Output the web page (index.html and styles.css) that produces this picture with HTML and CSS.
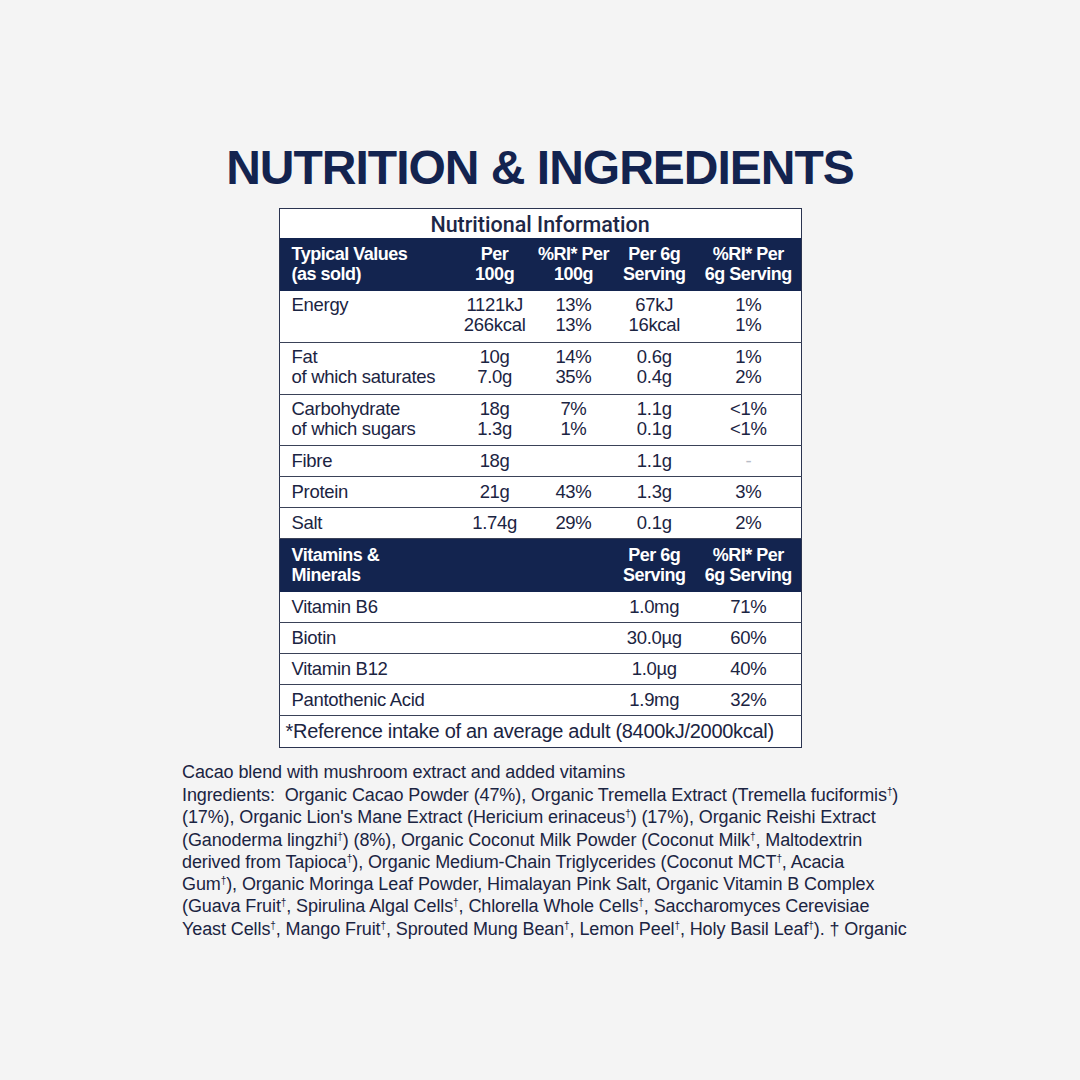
FILE: index.html
```html
<!DOCTYPE html>
<html lang="en">
<head>
<meta charset="utf-8">
<title>Nutrition &amp; Ingredients</title>
<link rel="stylesheet" href="styles.css">
</head>
<body>
<main class="page">
  <h1 class="title">NUTRITION &amp; INGREDIENTS</h1>
  <table class="nutri">
    <colgroup>
      <col class="c1"><col class="c2"><col class="c3"><col class="c4"><col class="c5">
    </colgroup>
    <tr class="caption-row"><td colspan="5">Nutritional Information</td></tr>
    <tr class="head">
      <th class="lbl">Typical Values<br>(as sold)</th>
      <th>Per<br>100g</th>
      <th>%RI* Per<br>100g</th>
      <th>Per 6g<br>Serving</th>
      <th>%RI* Per<br>6g Serving</th>
    </tr>
    <tr class="double">
      <td class="lbl">Energy</td>
      <td>1121kJ<br>266kcal</td>
      <td>13%<br>13%</td>
      <td>67kJ<br>16kcal</td>
      <td>1%<br>1%</td>
    </tr>
    <tr class="double">
      <td class="lbl">Fat<br>of which saturates</td>
      <td>10g<br>7.0g</td>
      <td>14%<br>35%</td>
      <td>0.6g<br>0.4g</td>
      <td>1%<br>2%</td>
    </tr>
    <tr class="double">
      <td class="lbl">Carbohydrate<br>of which sugars</td>
      <td>18g<br>1.3g</td>
      <td>7%<br>1%</td>
      <td>1.1g<br>0.1g</td>
      <td>&lt;1%<br>&lt;1%</td>
    </tr>
    <tr class="single">
      <td class="lbl">Fibre</td>
      <td>18g</td>
      <td></td>
      <td>1.1g</td>
      <td class="muted">-</td>
    </tr>
    <tr class="single">
      <td class="lbl">Protein</td>
      <td>21g</td>
      <td>43%</td>
      <td>1.3g</td>
      <td>3%</td>
    </tr>
    <tr class="single">
      <td class="lbl">Salt</td>
      <td>1.74g</td>
      <td>29%</td>
      <td>0.1g</td>
      <td>2%</td>
    </tr>
    <tr class="head">
      <th class="lbl">Vitamins &amp;<br>Minerals</th>
      <th></th>
      <th></th>
      <th>Per 6g<br>Serving</th>
      <th>%RI* Per<br>6g Serving</th>
    </tr>
    <tr class="single">
      <td class="lbl">Vitamin B6</td>
      <td></td><td></td>
      <td>1.0mg</td>
      <td>71%</td>
    </tr>
    <tr class="single">
      <td class="lbl">Biotin</td>
      <td></td><td></td>
      <td>30.0µg</td>
      <td>60%</td>
    </tr>
    <tr class="single">
      <td class="lbl">Vitamin B12</td>
      <td></td><td></td>
      <td>1.0µg</td>
      <td>40%</td>
    </tr>
    <tr class="single">
      <td class="lbl">Pantothenic Acid</td>
      <td></td><td></td>
      <td>1.9mg</td>
      <td>32%</td>
    </tr>
    <tr class="foot"><td colspan="5">*Reference intake of an average adult (8400kJ/2000kcal)</td></tr>
  </table>

  <section class="ingredients">
    <p class="desc">Cacao blend with mushroom extract and added vitamins</p>
    <p class="list">Ingredients:&nbsp; Organic Cacao Powder (47%), Organic Tremella Extract (Tremella fuciformis<sup>†</sup>)<br>(17%), Organic Lion's Mane Extract (Hericium erinaceus<sup>†</sup>) (17%), Organic Reishi Extract<br>(Ganoderma lingzhi<sup>†</sup>) (8%), Organic Coconut Milk Powder (Coconut Milk<sup>†</sup>, Maltodextrin<br>derived from Tapioca<sup>†</sup>), Organic Medium-Chain Triglycerides (Coconut MCT<sup>†</sup>, Acacia<br>Gum<sup>†</sup>), Organic Moringa Leaf Powder, Himalayan Pink Salt, Organic Vitamin B Complex<br>(Guava Fruit<sup>†</sup>, Spirulina Algal Cells<sup>†</sup>, Chlorella Whole Cells<sup>†</sup>, Saccharomyces Cerevisiae<br>Yeast Cells<sup>†</sup>, Mango Fruit<sup>†</sup>, Sprouted Mung Bean<sup>†</sup>, Lemon Peel<sup>†</sup>, Holy Basil Leaf<sup>†</sup>). † Organic</p>
  </section>
</main>
</body>
</html>
```

FILE: styles.css
```css
html, body {
  margin: 0;
  padding: 0;
  background: #f4f4f4;
}
body {
  width: 1080px;
  height: 1080px;
  font-family: "Liberation Sans", Arial, sans-serif;
  color: #1b2442;
}
.page {
  display: flex;
  flex-direction: column;
  align-items: center;
  padding-top: 143px;
}
.title {
  margin: 0 0 15px 0;
  font-family: "Liberation Sans", Arial, sans-serif;
  font-weight: 700;
  font-size: 48px;
  line-height: 50px;
  letter-spacing: -1px;
  color: #13234f;
}
.nutri {
  width: 523px;
  border-collapse: collapse;
  background: #ffffff;
  border: 1.5px solid #2b3450;
  font-size: 18.5px;
  letter-spacing: -0.3px;
  color: #1b2442;
}
.c1 { width: 176px; }
.c2 { width: 80px; }
.c3 { width: 78px; }
.c4 { width: 84px; }
.c5 { width: 105px; }
.nutri td, .nutri th {
  padding: 0;
  text-align: center;
  vertical-align: top;
}
.nutri .lbl {
  text-align: left;
  padding-left: 12px;
}
.caption-row td {
  height: 28px;
  font-family: Roboto, "Liberation Sans", sans-serif;
  font-weight: 500;
  font-size: 21.5px;
  letter-spacing: 0px;
  vertical-align: middle;
  color: #1d2747;
  padding-top: 1px;
}
.head {
  background: #13244f;
  color: #ffffff;
}
.head th {
  height: 51px;
  font-weight: 700;
  font-size: 18px;
  line-height: 20px;
  letter-spacing: -0.5px;
  vertical-align: middle;
  padding-bottom: 2px;
}
.double td {
  height: 51.5px;
  line-height: 20px;
  padding-top: 4px;
  box-sizing: border-box;
  border-bottom: 1.5px solid #3a4258;
}
.single td {
  height: 30px;
  line-height: 20px;
  vertical-align: middle;
  border-bottom: 1.5px solid #3a4258;
}
.muted { color: #b8bcc6; }
.foot td {
  height: 31px;
  text-align: left;
  padding-left: 6px;
  font-size: 20px;
  letter-spacing: -0.3px;
  vertical-align: middle;
}
.ingredients {
  width: 718px;
  margin-left: 2px;
  margin-top: 12px;
  font-size: 18px;
  letter-spacing: -0.1px;
  color: #1b2442;
  white-space: nowrap;
}
.ingredients p {
  margin: 0;
}
.desc {
  line-height: 24px;
}
.list {
  line-height: 22.3px;
}
sup {
  font-size: 10px;
  line-height: 0;
  vertical-align: 6px;
}
```
